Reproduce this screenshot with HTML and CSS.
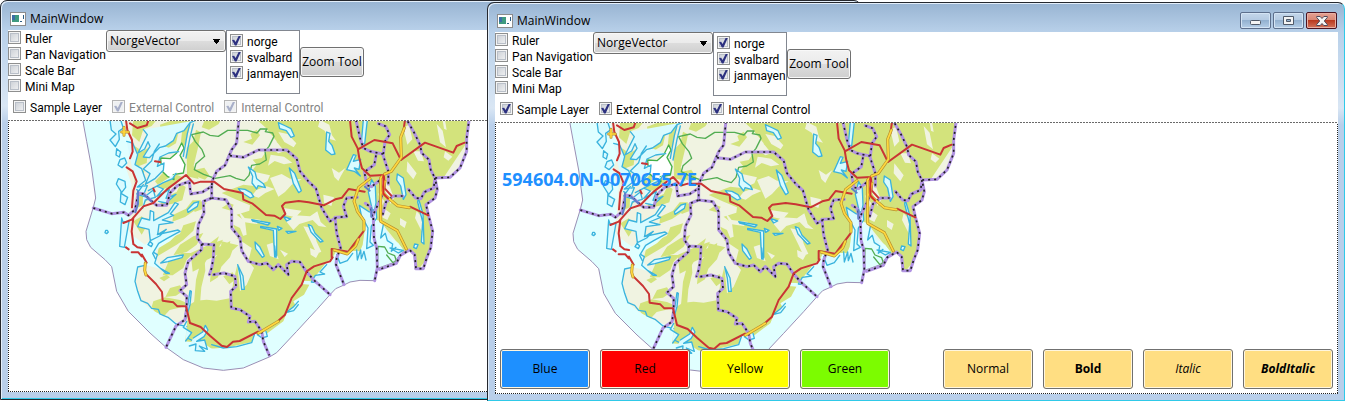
FILE: index.html
```html
<!DOCTYPE html>
<html lang="en">
<head>
<meta charset="utf-8">
<title>MainWindow</title>
<link rel="stylesheet" href="styles.css">
</head>
<body>
<main class="desktop">

<section class="window window-back">
  <header class="titlebar">
    <svg class="app-icon" width="16" height="14" viewBox="0 0 16 14"><rect x=".5" y=".5" width="15" height="13" fill="#fff" stroke="#8c8c8c"/><rect x="2" y="3" width="7" height="7" fill="#3f9a80"/><path d="M2 3h3v5H2z" fill="#3d6fa5"/><path d="M10 9h2v1h-2zM13 3h1v4h-1z" fill="#2d5f86"/></svg>
    <h1 class="title">MainWindow</h1>
  </header>
  <div class="client">
    <div class="tools">
      <div class="checks">
        <label class="check"><input type="checkbox">Ruler</label>
        <label class="check"><input type="checkbox">Pan Navigation</label>
        <label class="check"><input type="checkbox">Scale Bar</label>
        <label class="check"><input type="checkbox">Mini Map</label>
      </div>
      <select class="layer-select" aria-label="Layer"><option>NorgeVector</option></select>
      <div class="listbox">
        <label class="check"><input type="checkbox" checked>norge</label>
        <label class="check"><input type="checkbox" checked>svalbard</label>
        <label class="check"><input type="checkbox" checked>janmayen</label>
      </div>
      <button class="zoom-button" type="button">Zoom Tool</button>
    </div>
    <div class="layers">
      <label class="check"><input type="checkbox">Sample Layer</label>
      <label class="check off"><input type="checkbox" checked disabled>External Control</label>
      <label class="check off"><input type="checkbox" checked disabled>Internal Control</label>
    </div>
    <div class="map">
      <svg class="map-image" width="480" height="270" viewBox="-183 9 1440 810">
        <defs>
          <clipPath id="land-clip"><path id="land" d="M160 6L168 40 190 70 180 110 168 150 185 200 178 300 163 320 185 350 225 380 262 350 330 340 300 370 258 395 250 415 280 455 225 440 203 450 195 490 213 550 245 575 290 600 350 625 345 670 400 675 425 692 475 688 545 672 552 645 580 655 640 610 650 585 682 572 670 550 702 530 718 500 695 498 700 488 728 490 740 470 765 438 790 415 800 396 870 400 878 380 885 330 892 290 905 300 930 310 950 350 985 375 1005 402 1020 396 1032 410 1035 455 1060 452 1070 420 1082 396 1088 340 1075 290 1068 260 1095 240 1102 215 1095 180 1140 178 1170 150 1190 100 1190 60 1198 6z"/></clipPath>
          <g id="norway" fill="none" stroke-linejoin="round" stroke-linecap="round">
            <path fill="#e0ffff" stroke="#9a8fb5" stroke-width="3" d="M37 0L50 70 65 150 77 240 70 268 48 340 50 365 62 388 105 425 125 446 140 520 175 580 240 645 288 688 340 725 400 750 460 757 520 750 600 716 620 704 680 640 740 575 780 530 797 512 820 502 840 492 870 487 912 488 920 452 970 434 1000 400 1020 396 1032 410 1035 455 1060 452 1070 420 1082 396 1088 340 1075 290 1068 260 1095 240 1102 215 1095 180 1140 178 1170 150 1190 100 1190 60 1198 0"/>
            <use href="#land" fill="#f0f3e1"/>
            <g clip-path="url(#land-clip)">
              <g fill="#d3e37c">
                <path d="M555 0L588 30 620 70 618 92 590 98 575 120 548 125 560 140 545 160 600 172 592 190 560 205 520 200 480 215 455 225 500 245 540 262 538 278 500 290 525 310 530 350 500 360 545 390 535 430 552 450 530 500 510 520 502 440 490 490 483 540 440 548 410 545 378 548 356 562 352 610 345 680 480 700 600 660 720 520 800 410 900 400 900 300 930 310 1005 402 1040 460 1090 400 1120 180 1200 60V0z"/>
                <path d="M190 0h75l-20 24-25 10-12 38-22-20zM270 20l38-14h35l-15 25-10 45-25 15-28 10 10-40zM195 85l22 15 18-10-5 45-25 10-22-15zM350 90l20-20 8-35 15 8-10 50-12 50 15 40-35-8zM340 6h22l-14 70-18 20zM195 150l28 8-8 40-22-5zM255 190l30-32 55 20-25 22-40 15zM205 225l30 15-14 20-20 10zM280 240l40-18 12-25 15 10-10 40-30 10-40 10zM310 290l38-18 20-25 25 0-18 30-30 20-38 14zM190 310l25-15 20 20-20 35zM270 375l60-28 10-25 38-12-8 28-30 28-20 14-60 36zM300 420l35-15 35 0-20 20-10 25-32 22-30 0z"/>
                <path d="M362 405l45-20 40-30-6 16 18-6-12 22 34-18-4 20-22 15-45 22-12 20-30 15zM425 430l25-28 40-12-10 28-26 28-10 32-24 15zM455 370l50 12-20 18-35 5zM250 550l35-12 45 8 22 10-18 12-35 8-20 22-24-15-10-16zM300 510l30-8 10 16-22 15-32 4zM268 480l22-10 10 8-18 12zM370 270l15-22 25 6-14 20-22 8zM455 270l22-15 14 5-8 18z"/>
                <path d="M405 4l48 2-8 13-28 16-22-7zM520 72l26-10-5-14 19-13 10 17-23 28zM375 155l28-6 15 23-13 13-25-9z"/>
                <path d="M372 555l6-70 12-45 14-12 2 30-12 50-4 50zM460 475l28-12 10 20-20 16zM330 380l40-25 30-10-20 35-30 22-40 10zM490 320l20 10 12 30-24-14z"/>
              </g>
              <g fill="#f0f3e1">
                <path d="M602 110l40 6 25 18-25 5-28-10-20 14zM600 180l35-12 25 14 35 2-30 16-20 22-20 14zM605 60l18 15 20 25-18 6-22-16zM625 42l28 6 26 28-8 12-28-16zM785 150l22 14 20-15-14 24-8 16-12-12zM750 6l28 14 8 32 12 16-22-6-12-24-20-12zM560 215l30-10 24 8-28 12-20 14-20-6z"/>
                <path d="M930 178l24 14 18 48-10 18-16-38-20-20zM1000 30l12 50 15-16-10-44zM1030 100l14 28 18 2-10-30zM1100 18l10 55 18 15-10-50zM1125 6l5 30-8-4-4-26zM1125 100l22 16-12 12-14-10zM1012 130l28 36-10 18-20-24zM925 225l18 25-10 18zM1040 280l20 22-5 38-20-40zM940 270l22 16-10 20-16-8zM990 300l20 12-6 18-14-10z"/>
                <path d="M640 270l55 8-18 20-35-8zM648 310l28-18 44 3 22-15 10 32 18 16-24-4-18-18-40 12-18 18zM700 325l30 6 10 40 14 30-14 6-20-42zM760 230l32 8-8 26-22-10zM720 390l28 12-10 18-16-10zM590 380l10 34 26 10-18-50zM630 395l14 22 10-10zM500 270l24 30 50 6-14 12-40-6z"/>
              </g>
            </g>
            <path stroke="#3ab3dd" stroke-width="4" d="M225 442l-22 5-8 43 8 30 10 28 20 8 12 15 20 3 5 14 24 10 24 20 32 8M352 660l20 10 20-4M553 650l-8 24-45 12-40 4-35-10"/>
            <path fill="#ffffff" stroke="#45b04a" stroke-width="4" d="M272 120L300 122 320 105 335 75 342 90 330 112 345 140 340 165 310 170 312 185 292 175 275 158z"/>
            <path stroke="#52ad52" stroke-width="4" d="M365 50l35-8 20 10 25 3 28-18h60l28 8 10-12h20l-5 8 22 4 4 10-15 30-12 15 4 26-20 12-24 4-8 30-14 16-25-7-18-8-45 8-34-12-28-14 5-18 26-22-8-20-20-24zM922 455l2-70 20 2 10 18 20 8 6 18-12 2-18-22"/>
            <g class="water" fill="#d9fbff" stroke="#3ab3dd" stroke-width="4">
              <path d="M120 6l4 30 14 12-18 18 16 20 12-22-2-24 14-10-8-24M140 92l12 10-4 15-10-6zM150 125l14-5 6 15-14 14-12-8zM145 182l20 8 2 18-14 18 20 12-8 22-14-8 2-32-14-22zM170 70l18 5 15 35-8 30 20 12 12 35-25 20 30-4-10 24-22-12"/>
              <path d="M220 35l12 15-28 55 20-12 10-22 6 14-20 32 18 2 30-30 18-5 24-16 10-22 22-8 18-24 30-12h50l10-8M268 78l-15 22-8 28-25 25 20 14-14 32 30-18 24-24 2-22-20 10 8-28 26-12 30-4"/>
              <path d="M348 120l12-62 10-40M340 115l12-68 8-30M235 218l45-24 28-12 10-16M220 200l-20 28 24 8 26-20 6 22-30 8-8 25M262 205l18 8-20 22 38-20-10 26 30-12-30 26-22-5"/>
              <path d="M155 300l-6 85 14 3 14-78-18 2zM215 300l24 6 2-28 10 4v26l44-24 20-30 10 4-24 30 10 4-34 14 32 8-42 6-4 30 26-16-20 20-28 14-4-34-34-8zM352 275l20-20 14-4-4 14-28 18zM262 350l62-14 6 4-40 22-24 14-18 30 8 16"/>
              <path d="M535 147l20 15 5 20 20 15 6 12-22-6-4 10-14-18 2-20zM505 212l20 2 18 10 8 12-10 4-28-18zM545 305l55 10-6 6-46-12zM572 325l48 8v80l-6 4-4-80-38-8zM555 372l14 14 14 28-6 4-20-26zM625 14l22 10 16 8 10 22-10 4-14-20-20-6zM770 42l10 4-4 24 10 12 9 26-10 2-18-14zM658 150l16 16 20 52-8 6-16-28zM880 6l-6 68 10 4 8-72zM715 320l10 4 10 22 24 24-8 2-28-30zM640 295l22 8-12 6zM622 325l14 6-10 6zM648 340l30 0-24 6z"/>
              <path d="M830 155l20-45 8 2-8 18 22-6-5 30-14-4 18 24-18-14zM982 168l18 12 8 50-8 14-8-40-12-18zM868 262l30 20 20-10 2 28-16 24-4 48 10 10-20 10 4-62-20-38zM905 185l-10 38 10 44 5 28 8-40-2-50zM940 320l-8 40 14-14 6 22 16 10-4 22 14-12M1045 240l14 48 3 90-8-6 4-60-15-60zM1034 378l10 2-5 12-8-4zM960 390l25 15 15-8z"/>
              <path d="M270 450l28 16-10 0-34-30 8-26-10-6M272 435l20-16 48-8-4 8-42 12zM360 518l4 2-4 40-12 42-4-6 10-38zM350 610l-10 18 25 16-18 25M370 660l28-18 8-20 8 14-12 20-22 14 24-4 8 28-24-10 16 16-28-2 2-20-20 6M562 650l14 10 16-5-4-15M503 440l16 34 4 40-8 0-4-40zM614 384l4 34"/>
              <path d="M770 440l-20 22 14 6-28 4-12 20 16 2M685 550l-16 18-22 16 24-6 14-18M860 396l2 30 10-30 2 26 8-22 6 26M800 410l10 26 22-8 16-22M240 370l8 8-4 8-10-6zM107 337l5 0 3 5-5 5-5-3z"/>
            </g>
            <g stroke="#b193e2" stroke-width="9">
              <g id="borders">
                <path d="M70 270L125 287 162 283 175 292 195 275 205 225 222 228 240 245 260 262 290 262 300 225 322 203 358 190 362 228 398 222 425 205 427 188 440 160 465 142 485 95 500 75 507 0M480 113L520 118 565 96 650 96 680 122 690 160 715 190 738 212 755 270 780 310 800 298 830 296 820 265 830 240 862 238M425 205L425 240 400 250 402 285 385 320 382 360 395 378 432 380 430 420 425 450 418 470M425 240L468 245 485 275 485 330 510 360 515 398 535 430 570 440 590 435 610 455 625 440 655 470 650 440 665 430 690 432 705 455 730 485 780 530M395 378L395 395 355 430 345 465 350 500 330 518 350 535 350 572 345 605 318 624 288 688M430 470L462 465 495 475 498 505 482 520 484 570 510 575 540 595 535 612 555 610 575 640 580 670 598 712M795 298L800 345 812 390 800 420 798 440 822 500"/>
                <path d="M858 6L870 60 880 90 900 100 938 108 955 160 955 198M940 108l5-38 14-20-12-25-22-8M918 112l-5 28-30 22 8 40 14 4 25-20 5 50-28 60-6-30-15-10M910 300l2 60 8 30 2 60-8 38M1013 10l20 35 17 35 5 25 22 20 5 30 10 20M1095 180l-4 30-28 12-10 20-16-2-22-26M1198 0l-8 60v40l-20 50-30 28-45 2 7 35-7 25-27 20 7 30 13 50-6 50-12 30-10 32h-22l-4-42-15-14-28 16-12 24-50 18M938 290l10-38 22-18h28"/>
              </g>
              <g stroke="#202020" stroke-width="5" stroke-dasharray="6 12" stroke-linecap="butt"><use href="#borders"/></g>
            </g>
            <g stroke="#c93434" stroke-width="6">
              <path d="M168 6l4 30 14 30 2 35-8 20M180 16l22 14 28-8 5-14M170 148l18 12 12 30-10 28-4 50M160 315l25-10 35-40 30-10 40-40 58-44 24 26 20-6 40 0 30 22 56 12 2 20 28 12 40 34 25 2 18 10 15-15-10-24 10-10 40-5 30 4 45 9 35-18 20-5 20-26 48 8M190 300l-5 40 5 38M168 388l8 6M190 378l12 10 14 2M185 403h20l10 12M216 410l14 24M840 6l5 50 18 35 5 30 8 30 24 22 42-2 2 40 20 22M868 92l45-26 55 10 25 50 72-52 85 30 10-20 24-10M1005 6l-5 35M1020 266l55 26M785 418v-25l50 8 45-60"/>
              <path d="M226 466l32 32 18 24 2 26 32 5 12 12 26 0 12 50 32 12 28 26 35 30 16 4 18-16 20-2 55-28M625 608l20-18 20-50 30-40 15-40 22-15 48-15 8-12M255 130l15 2M250 212l4 8"/>
            </g>
            <g stroke="#b8912e" stroke-width="9"><path id="motorways" d="M1003 30l-11 28 2 60-30 42-20 8-12 12v130l50 28 27 55M900 182l-34 26-14 42 10 30 20 28v28M945 190l-8 35 45 38 36 6M792 396l40 12 25-24 8-20M226 435l-2 22 4 14M565 646l60-36M155 42h20M162 28v24"/></g>
            <use href="#motorways" stroke="#ffd83e" stroke-width="5"/>
            <path stroke="#d62c2c" stroke-width="6" d="M940 172v55l14 14"/>
            <path stroke="#607fc9" stroke-width="6" d="M204 220v38l-8 25M222 230l22 20M885 206l14 12M904 270v26"/>
          </g>
        </defs>
        <use href="#norway"/>
      </svg>
    </div>
  </div>
</section>

<section class="window window-front">
  <header class="titlebar">
    <svg class="app-icon" width="16" height="14" viewBox="0 0 16 14"><rect x=".5" y=".5" width="15" height="13" fill="#fff" stroke="#8c8c8c"/><rect x="2" y="3" width="7" height="7" fill="#3f9a80"/><path d="M2 3h3v5H2z" fill="#3d6fa5"/><path d="M10 9h2v1h-2zM13 3h1v4h-1z" fill="#2d5f86"/></svg>
    <h1 class="title">MainWindow</h1>
    <div class="caption-buttons">
      <button class="caption" type="button" aria-label="Minimize"><svg width="13" height="9" viewBox="0 0 13 9"><rect x="1.5" y="4.500" width="10" height="4" rx="1" fill="#f4f4f4" stroke="#4f5968"/></svg></button>
      <button class="caption" type="button" aria-label="Maximize"><svg width="11" height="9" viewBox="0 0 11 9"><path fill="#f4f4f4" fill-rule="evenodd" stroke="#4f5968" d="M.5.500h10v8H.5zM3.500 3.500v2h4v-2z"/></svg></button>
      <button class="caption close" type="button" aria-label="Close"><svg width="12" height="10" viewBox="0 0 12 10"><path fill="#f4f4f4" stroke="#4f4a5a" d="M.7.500h3.500L6 2.500 7.800.500h3.500v1L8.300 5l3 3.500v1H7.800L6 7.500l-1.800 2H.7v-1L3.700 5l-3-3.500z"/></svg></button>
    </div>
  </header>
  <div class="client">
    <div class="tools">
      <div class="checks">
        <label class="check"><input type="checkbox">Ruler</label>
        <label class="check"><input type="checkbox">Pan Navigation</label>
        <label class="check"><input type="checkbox">Scale Bar</label>
        <label class="check"><input type="checkbox">Mini Map</label>
      </div>
      <select class="layer-select" aria-label="Layer"><option>NorgeVector</option></select>
      <div class="listbox">
        <label class="check"><input type="checkbox" checked>norge</label>
        <label class="check"><input type="checkbox" checked>svalbard</label>
        <label class="check"><input type="checkbox" checked>janmayen</label>
      </div>
      <button class="zoom-button" type="button">Zoom Tool</button>
    </div>
    <div class="layers">
      <label class="check"><input type="checkbox" checked>Sample Layer</label>
      <label class="check"><input type="checkbox" checked>External Control</label>
      <label class="check"><input type="checkbox" checked>Internal Control</label>
    </div>
    <div class="map">
      <svg class="map-image" width="480" height="270" viewBox="-183 9 1440 810"><use href="#norway"/></svg>
      <div class="overlay">
        <p class="position">594604.0N-0070655.7E</p>
        <div class="map-buttons">
          <div class="group">
            <button class="map-button blue" type="button">Blue</button>
            <button class="map-button red" type="button">Red</button>
            <button class="map-button yellow" type="button">Yellow</button>
            <button class="map-button green" type="button">Green</button>
          </div>
          <div class="group">
            <button class="map-button" type="button">Normal</button>
            <button class="map-button bold" type="button">Bold</button>
            <button class="map-button italic" type="button">Italic</button>
            <button class="map-button bold italic" type="button">BoldItalic</button>
          </div>
        </div>
      </div>
    </div>
  </div>
</section>

</main>
</body>
</html>
```
FILE: styles.css
```css
* { box-sizing: border-box; }

body {
  margin: 0;
  font: 12px/16px "Open Sans", "Noto Sans", sans-serif;
  color: #000;
  background: #fff;
}

button, select, input { font: inherit; color: inherit; margin: 0; }

.desktop {
  position: relative;
  height: 100vh;
  min-height: 320px;
  overflow: hidden;
}

.window {
  position: absolute;
  display: flex;
  flex-direction: column;
  padding: 0 7px 6px;
  border: 1px solid #25282e;
  border-radius: 7px 7px 0 0;
  background: linear-gradient(#98b4d2, #b9d1ea 30px, #d9e6f4 105px, #b9cfea 122px);
  box-shadow: inset 1px 1px 0 #e3eefa, inset 0 -1px 0 #2fc9e8;
}

.window-back { left: 0; top: 0; width: 64%; bottom: 1px; padding-bottom: 7px; }

.window-front {
  left: 487px;
  right: 0;
  top: 2px;
  bottom: 0;
  border-right-color: #2fc9e8;
  border-bottom-color: #2fc9e8;
  padding-right: 6px;
  box-shadow: inset 1px 1px 0 #e3eefa;
}

.titlebar {
  display: flex;
  align-items: center;
  flex: none;
  height: 29px;
  padding: 6px 1px 0 2px;
}

.app-icon { margin-right: 4px; }

.title { margin: 0; font-size: 12px; font-weight: 400; }

.caption-buttons { display: flex; gap: 2px; margin-left: auto; }

.caption {
  display: grid;
  place-items: center;
  width: 31px;
  height: 17px;
  padding: 0;
  border: 1px solid #5d6f8c;
  border-radius: 2px;
  background: linear-gradient(#c4d6ea, #b4cae2 48%, #93b1d0 50%, #b6cfe8);
  box-shadow: inset 0 0 0 1px #d4e4f4;
}

.close {
  border-color: #4b1220;
  background: linear-gradient(#e5a193, #d98673 48%, #b93a20 50%, #d3745c);
  box-shadow: inset 0 0 0 1px #e8b0a4;
}

.client {
  display: flex;
  flex-direction: column;
  flex: 1;
  min-height: 0;
  background: #fff;
}

.tools { display: flex; align-items: flex-start; height: 64px; }

.checks { width: 98px; padding-top: 1px; }

.check {
  display: flex;
  gap: 4px;
  height: 16px;
  font-family: Roboto, "Open Sans", sans-serif;
  line-height: 16px;
  white-space: nowrap;
}

.check input {
  appearance: none;
  flex: none;
  width: 13px;
  height: 13px;
  border: 1px solid #8e8f8f;
  background: linear-gradient(135deg, #c6cbd2, #f6f6f6);
  box-shadow: inset 0 0 0 1px #f4f4f4, inset 0 0 0 2px #b9bfc8;
  display: grid;
  place-items: center;
}

.check input:checked::before {
  content: "";
  width: 9px;
  height: 10px;
  background: #2d3180;
  clip-path: polygon(0 45%, 24% 42%, 40% 65%, 76% 0, 100% 0, 50% 100%, 32% 100%);
}

.off { color: #838383; }
.check.off input { border-color: #b4b4b4; box-shadow: inset 0 0 0 1px #f4f4f4; background: #eef0f2; }
.check.off input:checked::before { background: #a8afc9; }

.layer-select {
  appearance: none;
  width: 120px;
  height: 22px;
  padding: 0 4px 0 3px;
  border: 1px solid #707070;
  border-radius: 3px;
  background:
    linear-gradient(#000, #000) 106px 8px / 7px 1px no-repeat,
    linear-gradient(#000, #000) 107px 9px / 5px 1px no-repeat,
    linear-gradient(#000, #000) 107px 10px / 5px 1px no-repeat,
    linear-gradient(#000, #000) 108px 11px / 3px 1px no-repeat,
    linear-gradient(#000, #000) 109px 12px / 1px 1px no-repeat,
    linear-gradient(#f2f2f2, #ebebeb 48%, #dddddd 50%, #cfcfcf);
  box-shadow: inset 0 0 0 1px #f8f8f8;
}

.listbox {
  width: 74px;
  height: 64px;
  padding: 3px;
  border: 1px solid #828790;
}

.zoom-button {
  align-self: center;
  width: 64px;
  height: 30px;
  padding: 0;
  border: 1px solid #707070;
  border-radius: 3px;
  background: linear-gradient(#f2f2f2, #ebebeb 48%, #dddddd 50%, #cfcfcf);
  box-shadow: inset 0 0 0 1px #f8f8f8;
  white-space: nowrap;
}

.layers { display: flex; gap: 10px; padding: 6px 5px 4px; }

.map {
  display: grid;
  grid-template: minmax(0, 1fr) / minmax(0, 1fr);
  flex: 1;
  min-height: 0;
  overflow: hidden;
  padding: 1px;
  background:
    repeating-linear-gradient(90deg, #6a6a6a 0 2px, #fff 2px 3px) top / 100% 1px no-repeat,
    repeating-linear-gradient(90deg, #222 0 1px, #fff 1px 2px) bottom / 100% 1px no-repeat,
    repeating-linear-gradient(#222 0 1px, #fff 1px 2px) left / 1px 100% no-repeat,
    repeating-linear-gradient(#222 0 1px, #fff 1px 2px) right / 1px 100% no-repeat;
}

.map-image { grid-area: 1 / 1; }

.overlay {
  grid-area: 1 / 1;
  z-index: 1;
  display: flex;
  flex-direction: column;
  justify-content: space-between;
  padding: 44px 4px 4px;
}

.position {
  margin: 0;
  padding-left: 2px;
  font-size: 18px;
  line-height: 24px;
  font-weight: 700;
  color: #1e90ff;
}

.map-buttons { display: flex; justify-content: space-between; }
.group { display: flex; gap: 10px; }

.map-button {
  width: 90px;
  height: 40px;
  padding: 0;
  border: 1px solid #707070;
  border-radius: 3px;
  background: #ffde82;
  box-shadow: inset 0 0 0 1px #fff6de;
}

.blue { background: #1e90ff; }
.red { background: #f00; }
.yellow { background: #ff0; }
.green { background: #7cfc00; }
.bold { font-weight: 700; }
.italic { font-style: italic; }
```
